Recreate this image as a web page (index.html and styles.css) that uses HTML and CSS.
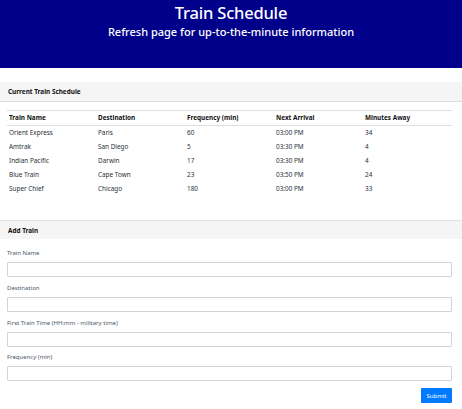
FILE: index.html
```html
<!DOCTYPE html>
<html lang="en">
<head>
<meta charset="utf-8">
<title>Train Schedule</title>
<link rel="stylesheet" href="styles.css">
</head>
<body>
<header class="hero">
  <h1 class="hero-title">Train Schedule</h1>
  <p class="hero-sub">Refresh page for up-to-the-minute information</p>
</header>

<main class="page">
  <section class="card card-schedule">
    <div class="card-header">Current Train Schedule</div>
    <div class="card-body">
      <table class="schedule">
        <thead>
          <tr><th>Train Name</th><th>Destination</th><th>Frequency (min)</th><th>Next Arrival</th><th>Minutes Away</th></tr>
        </thead>
        <tbody>
          <tr><td>Orient Express</td><td>Paris</td><td>60</td><td>03:00 PM</td><td>34</td></tr>
          <tr><td>Amtrak</td><td>San Diego</td><td>5</td><td>03:30 PM</td><td>4</td></tr>
          <tr><td>Indian Pacific</td><td>Darwin</td><td>17</td><td>03:30 PM</td><td>4</td></tr>
          <tr><td>Blue Train</td><td>Cape Town</td><td>23</td><td>03:50 PM</td><td>24</td></tr>
          <tr><td>Super Chief</td><td>Chicago</td><td>180</td><td>03:00 PM</td><td>33</td></tr>
        </tbody>
      </table>
    </div>
  </section>

  <section class="card card-add">
    <div class="card-header">Add Train</div>
    <form class="card-body add-form">
      <div class="field">
        <label class="field-label" for="name">Train Name</label>
        <input class="field-input" id="name" type="text">
      </div>
      <div class="field">
        <label class="field-label" for="dest">Destination</label>
        <input class="field-input" id="dest" type="text">
      </div>
      <div class="field">
        <label class="field-label" for="first">First Train Time (HH:mm - military time)</label>
        <input class="field-input" id="first" type="text">
      </div>
      <div class="field">
        <label class="field-label" for="freq">Frequency (min)</label>
        <input class="field-input" id="freq" type="text">
      </div>
      <div class="actions">
        <button class="btn-submit" type="button">Submit</button>
      </div>
    </form>
  </section>
</main>
</body>
</html>
```

FILE: styles.css
```css
html, body {
  margin: 0;
  padding: 0;
}
body {
  font-family: "Noto Sans", "Open Sans", sans-serif;
  color: #212529;
  background: #ffffff;
  overflow: hidden;
}
.hero {
  background: #00008b;
  color: #ffffff;
  height: 68px;
  text-align: center;
  padding-top: 2px;
  box-sizing: border-box;
}
.hero-title {
  margin: 0;
  font-size: 16.5px;
  font-weight: 500;
  line-height: 22px;
  letter-spacing: -0.2px;
}
.hero-sub {
  margin: 0;
  font-size: 11px;
  font-weight: 500;
  line-height: 16px;
}
.page {
  padding-top: 14px;
}
.card {
  background: #fff;
}
.card-header {
  background: #f5f5f5;
  font-size: 6.4px;
  font-weight: 700;
  color: #111;
  padding: 0 8px;
  height: 19px;
  line-height: 19px;
  border-bottom: 1px solid #dcdcdc;
}
.card-body {
  padding: 8px 10px 0 7px;
}
.schedule {
  width: 100%;
  border-collapse: collapse;
  table-layout: fixed;
  font-size: 6.4px;
}
.schedule th,
.schedule td {
  text-align: left;
  padding: 0 0 0 2px;
  height: 14px;
  line-height: 14px;
  white-space: nowrap;
}
.schedule td {
  color: #2a2f36;
}
.schedule th {
  font-weight: 700;
  color: #111;
  border-top: 1px solid #dcdfe3;
  border-bottom: 1px solid #dcdfe3;
  height: 13px;
}
.card-add {
  margin-top: 24px;
  border-top: 1px solid #e2e2e2;
}
.card-add .card-header {
  border-bottom: none;
  height: 18px;
  line-height: 19px;
}
.add-form {
  padding-top: 11px;
}
.field {
  margin-bottom: 7.8px;
}
.field-label {
  display: block;
  font-size: 6px;
  line-height: 7px;
  color: #4a5868;
  margin-bottom: 5px;
}
.field-input {
  display: block;
  width: 100%;
  box-sizing: border-box;
  height: 15px;
  margin: 0;
  border: 1px solid #d0d4d9;
  border-radius: 1px;
  background: #fff;
  padding: 0 3px;
  font: inherit;
}
.actions {
  display: flex;
  justify-content: flex-end;
  margin-top: -1px;
}
.btn-submit {
  width: 31px;
  height: 15px;
  border: none;
  border-radius: 1px;
  background: #007bff;
  color: #fff;
  font-family: "Noto Sans", sans-serif;
  font-size: 6px;
  padding: 0;
}
```
